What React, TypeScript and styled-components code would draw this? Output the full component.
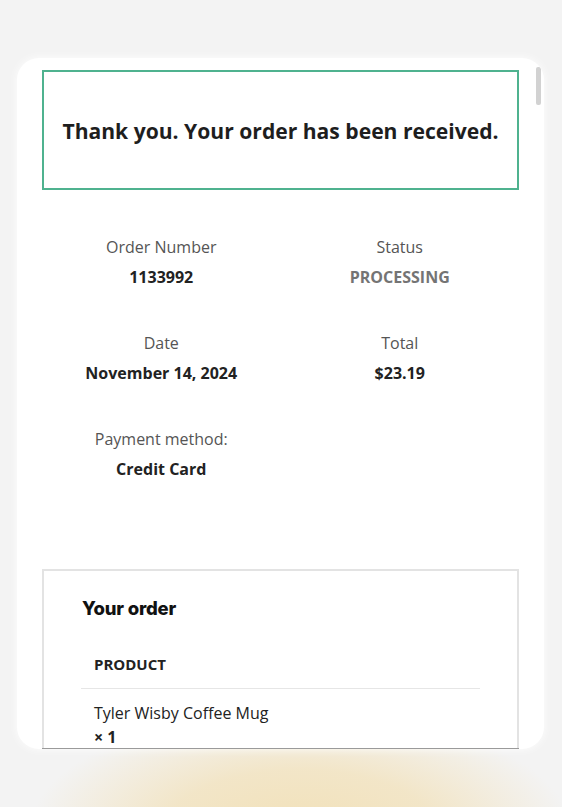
import styled, { createGlobalStyle } from 'styled-components'

const Global = createGlobalStyle`
  html, body {
    margin: 0;
    padding: 0;
  }
  body {
    font-family: "Open Sans", "Liberation Sans", sans-serif;
    color: #222;
  }
`

const Page = styled.div`
  width: 562px;
  height: 807px;
  overflow: hidden;
  background:
    radial-gradient(ellipse 270px 120px at 300px 830px, #f2e1b9 0%, rgba(242, 225, 185, 0.75) 50%, rgba(243, 243, 243, 0) 100%),
    #f3f3f3;
  padding-top: 58px;
  box-sizing: border-box;
`

const Card = styled.div`
  position: relative;
  margin-left: 17px;
  width: 527px;
  height: 691px;
  box-sizing: border-box;
  padding: 12px 25px 0 25px;
  background: #fff;
  border-radius: 22px;
  box-shadow: 0 0 10px rgba(255, 255, 255, 0.9);
  overflow: hidden;
`

const Scrollbar = styled.div`
  position: absolute;
  top: 9px;
  right: 3px;
  width: 5px;
  height: 38px;
  border-radius: 2px;
  background: #d2d2d2;
`

const Viewport = styled.div`
  height: 678px;
  overflow: hidden;
  border-bottom: 1.5px solid #9a9a9a;
`

const Notice = styled.div`
  height: 120px;
  box-sizing: border-box;
  border: 2px solid #4fb28f;
  display: flex;
  align-items: center;
  justify-content: center;
  font-size: 21.1px;
  font-weight: 700;
  color: #1e1e1e;
`

const Details = styled.div`
  display: grid;
  grid-template-columns: 1fr 1fr;
  row-gap: 42px;
  margin-top: 45px;
`

const Cell = styled.div`
  display: flex;
  flex-direction: column;
  align-items: center;
  gap: 6px;
`

const Label = styled.div`
  font-size: 16px;
  line-height: 24px;
  color: #555;
`

const Value = styled.div<{ $muted?: boolean }>`
  font-size: 16px;
  line-height: 24px;
  font-weight: 700;
  color: ${p => (p.$muted ? '#747474' : '#222')};
`

const OrderBox = styled.div`
  margin-top: 88px;
  border: 2px solid #e3e3e3;
  padding: 24px 37px 0 37px;
`

const OrderTitle = styled.h2`
  margin: 0 0 0 1px;
  font-family: "Inter", "Liberation Sans", sans-serif;
  font-size: 18.5px;
  line-height: 27px;
  font-weight: 800;
  letter-spacing: -0.2px;
  color: #111;
`

const Table = styled.div`
  margin-top: 31px;
  display: flex;
  flex-direction: column;
`

const HeadCell = styled.div`
  padding: 0 12px 13px 13px;
  border-bottom: 1.5px solid #e6e6e6;
  font-size: 15px;
  line-height: 22px;
  font-weight: 700;
  color: #222;
`

const ItemCell = styled.div`
  padding: 12px 12px 0 13px;
  font-size: 16px;
  line-height: 24px;
  color: #222;
`

const Qty = styled.div`
  font-weight: 700;
`

const details = [
  { label: 'Order Number', value: '1133992' },
  { label: 'Status', value: 'PROCESSING', muted: true },
  { label: 'Date', value: 'November 14, 2024' },
  { label: 'Total', value: '$23.19' },
  { label: 'Payment method:', value: 'Credit Card' },
]

export default function App() {
  return (
    <>
      <Global />
      <Page>
        <Card>
          <Scrollbar />
          <Viewport>
            <Notice>Thank you. Your order has been received.</Notice>
            <Details>
              {details.map(d => (
                <Cell key={d.label}>
                  <Label>{d.label}</Label>
                  <Value $muted={d.muted}>{d.value}</Value>
                </Cell>
              ))}
            </Details>
            <OrderBox>
              <OrderTitle>Your order</OrderTitle>
              <Table>
                <HeadCell>PRODUCT</HeadCell>
                <ItemCell>
                  Tyler Wisby Coffee Mug
                  <Qty>× 1</Qty>
                </ItemCell>
              </Table>
            </OrderBox>
          </Viewport>
        </Card>
      </Page>
    </>
  )
}
